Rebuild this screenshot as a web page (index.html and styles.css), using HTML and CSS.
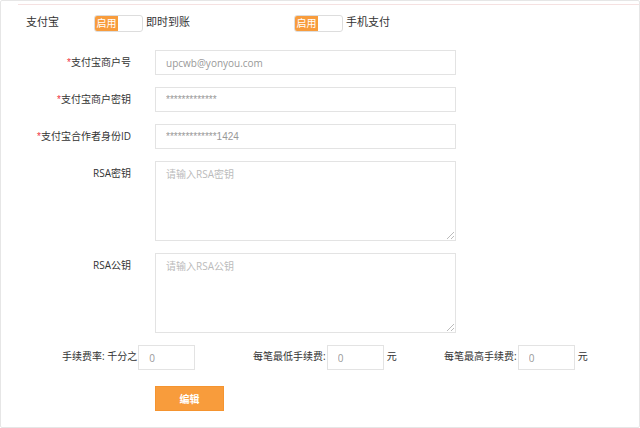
FILE: index.html
```html
<!DOCTYPE html>
<html lang="zh-CN">
<head>
    <meta charset="UTF-8">
    <meta name="viewport" content="width=device-width, initial-scale=1.0">
    <title>支付宝</title>
    <link rel="stylesheet" href="styles.css">
</head>
<body>
    <form class="panel">
        <div class="pay-header">
            <h2 class="pay-title">支付宝</h2>
            <label class="pay-type">
                <input type="checkbox" class="switch-input" checked>
                <span class="switch"><span class="switch-on">启用</span></span>
                <span>即时到账</span>
            </label>
            <label class="pay-type">
                <input type="checkbox" class="switch-input" checked>
                <span class="switch"><span class="switch-on">启用</span></span>
                <span>手机支付</span>
            </label>
        </div>

        <div class="form-row">
            <label for="account"><span class="required">*</span>支付宝商户号</label>
            <input type="text" id="account" class="control" value="upcwb@yonyou.com">
        </div>
        <div class="form-row">
            <label for="secret"><span class="required">*</span>支付宝商户密钥</label>
            <input type="text" id="secret" class="control masked" value="*************">
        </div>
        <div class="form-row">
            <label for="partner"><span class="required">*</span>支付宝合作者身份ID</label>
            <input type="text" id="partner" class="control masked" value="*************1424">
        </div>
        <div class="form-row">
            <label for="rsaSecret">RSA密钥</label>
            <textarea id="rsaSecret" class="control" placeholder="请输入RSA密钥"></textarea>
        </div>
        <div class="form-row">
            <label for="rsaPublic">RSA公钥</label>
            <textarea id="rsaPublic" class="control" placeholder="请输入RSA公钥"></textarea>
        </div>

        <div class="fee-row">
            <div class="fee">
                <label for="rate">手续费率: 千分之</label>
                <input type="text" id="rate" class="control" value="0">
            </div>
            <div class="fee">
                <label for="minFee">每笔最低手续费:</label>
                <input type="text" id="minFee" class="control" value="0">
                <span class="unit">元</span>
            </div>
            <div class="fee">
                <label for="maxFee">每笔最高手续费:</label>
                <input type="text" id="maxFee" class="control" value="0">
                <span class="unit">元</span>
            </div>
        </div>

        <div class="actions">
            <button type="button" class="btn-edit">编辑</button>
        </div>
    </form>
</body>
</html>
```

FILE: styles.css
```css
* {
    box-sizing: border-box;
}
body {
    margin: 0;
    background: #fff;
    color: #333;
    font-family: "Open Sans", "Noto Sans CJK SC", sans-serif;
    font-size: 10px;
    line-height: 16px;
}
.panel {
    padding: 3px 0 16px;
    border: 1px solid #e6e6e6;
    border-radius: 2px;
}

/* title and payment types */
.pay-header {
    display: grid;
    grid-template-columns: 68px 200px 1fr;
    margin-left: 17px;
    padding: 9px 0 18px 8px;
    border-top: 1px solid #f5e1e1;
    font-size: 11px;
}
.pay-title {
    margin: 0;
    font-size: 11px;
    font-weight: normal;
}
.pay-type {
    display: flex;
    gap: 3px;
    position: relative;
}
.switch-input {
    position: absolute;
    margin: 0;
    opacity: 0;
}
.switch {
    width: 49px;
    height: 17px;
    margin-top: 1px;
    border: 1px solid #ddd;
    border-radius: 3px;
    overflow: hidden;
}
.switch-on {
    display: block;
    width: 23px;
    height: 15px;
    background: #f89c3c;
    color: #fff;
    font-size: 10px;
    line-height: 15px;
    text-align: center;
}

/* fields */
.form-row {
    display: grid;
    grid-template-columns: 130px 47.2%;
    column-gap: 24px;
    margin-bottom: 12px;
}
.form-row label {
    padding-top: 4px;
    text-align: right;
}
.required {
    color: #f03040;
    font-family: "Liberation Sans", sans-serif;
}
.control {
    display: block;
    width: 100%;
    height: 25px;
    margin: 0;
    padding: 0 10px;
    border: 1px solid #e3e3e3;
    border-radius: 0;
    background: #fff;
    color: #999;
    font: inherit;
}
.masked {
    font-family: "Liberation Sans", sans-serif;
}
textarea.control {
    height: 80px;
    padding: 4px 10px;
    resize: both;
}
textarea.control::-webkit-resizer {
    background: linear-gradient(135deg, transparent 46%, #bbb 46%, #bbb 56%, transparent 56%, transparent 74%, #bbb 74%, #bbb 84%, transparent 84%) no-repeat right 1px bottom 1px / 7px 7px;
}
.control::placeholder {
    color: #bbb;
}

/* fees */
.fee-row {
    display: grid;
    grid-template-columns: repeat(3, 1fr);
    padding: 0 4px 0 61px;
}
.fee {
    display: flex;
    gap: 1px;
    line-height: 22px;
    white-space: nowrap;
}
.fee .control {
    width: 57px;
}
.unit {
    padding-left: 2px;
}

.actions {
    padding: 16px 0 0 154px;
}
.btn-edit {
    width: 69px;
    height: 25px;
    padding: 0;
    border: 1px solid #f5942f;
    background: #f89c3c;
    color: #fff;
    font: inherit;
    font-weight: bold;
}
```
